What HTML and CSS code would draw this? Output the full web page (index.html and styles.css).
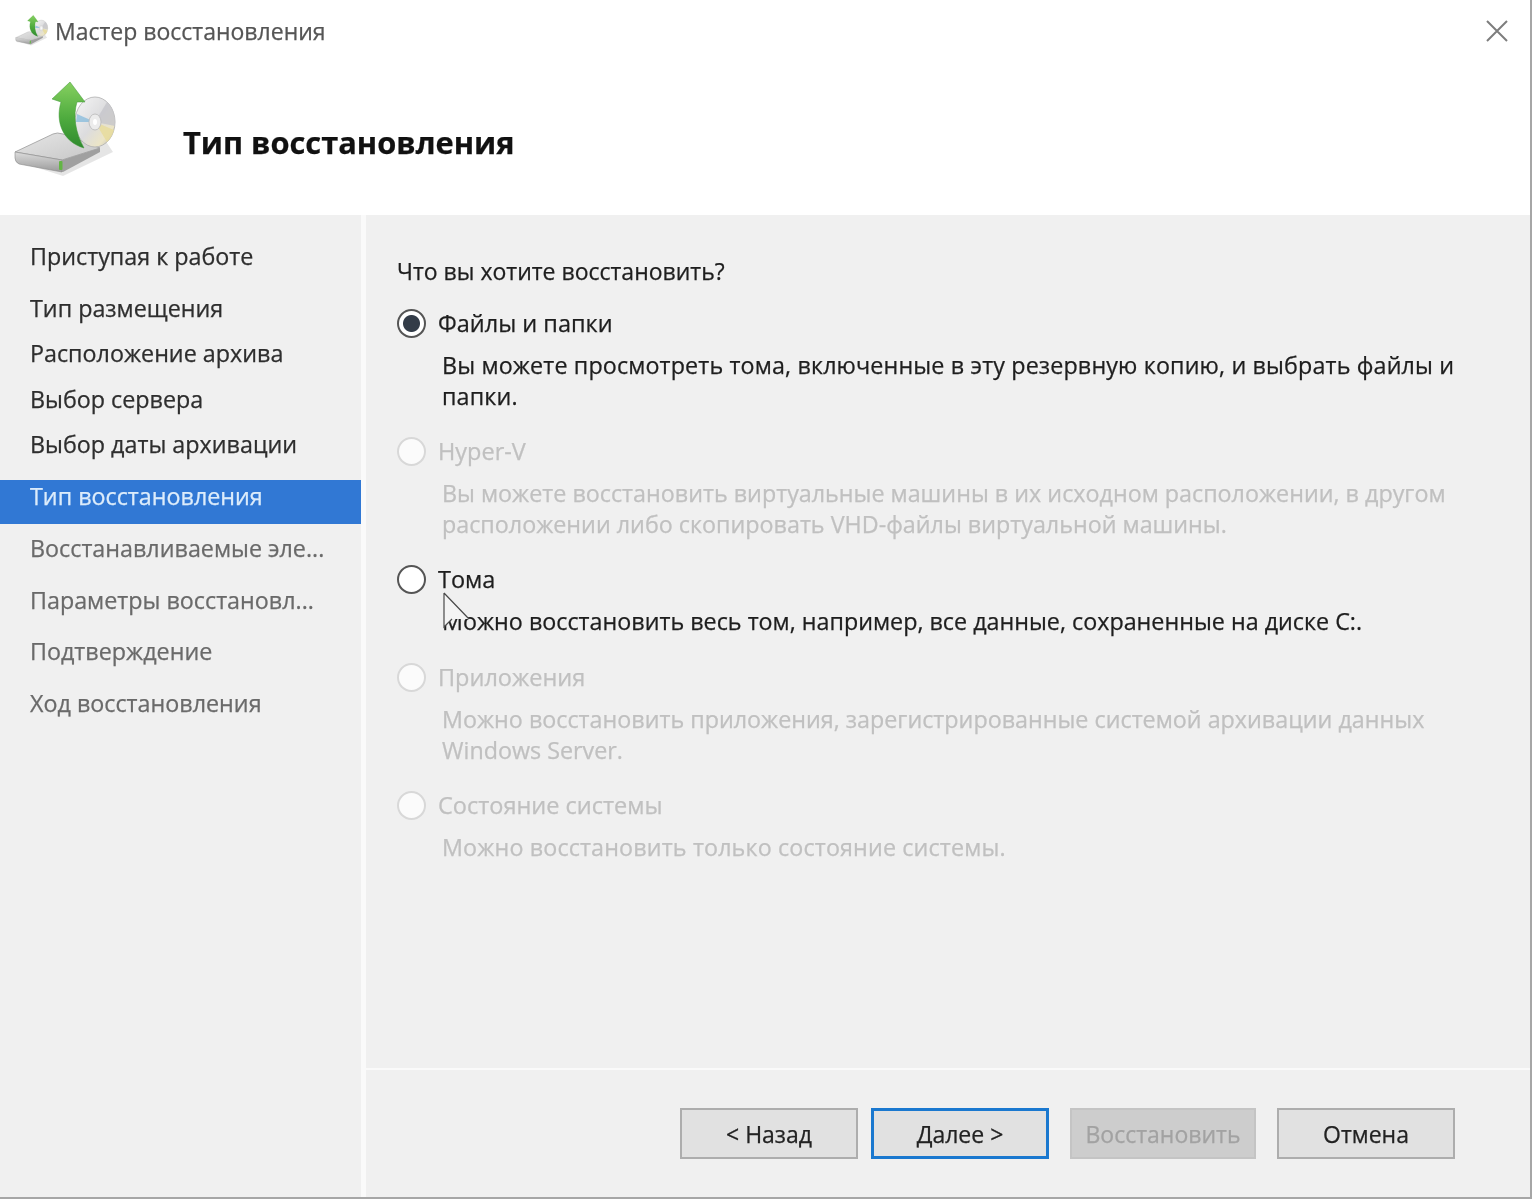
FILE: index.html
```html
<!DOCTYPE html>
<html lang="ru">
<head>
    <meta charset="UTF-8">
    <title>Мастер восстановления</title>
    <link rel="stylesheet" href="styles.css">
</head>
<body>
    <svg class="defs" width="0" height="0" aria-hidden="true">
        <defs>
            <linearGradient id="arrow-fill" x1="0" y1="0" x2="0" y2="1">
                <stop offset="0" stop-color="#86d060"/>
                <stop offset="0.55" stop-color="#4eab3e"/>
                <stop offset="1" stop-color="#2f8a2e"/>
            </linearGradient>
            <linearGradient id="disc-fill" x1="0" y1="0" x2="1" y2="1">
                <stop offset="0" stop-color="#f6f6f6"/>
                <stop offset="0.5" stop-color="#dcdcde"/>
                <stop offset="0.78" stop-color="#ece5c6"/>
                <stop offset="1" stop-color="#b4b4b6"/>
            </linearGradient>
            <linearGradient id="drive-top" x1="0" y1="0" x2="1" y2="1">
                <stop offset="0" stop-color="#e6e6e6"/>
                <stop offset="1" stop-color="#c6c6c6"/>
            </linearGradient>
            <linearGradient id="drive-side" x1="0" y1="0" x2="0" y2="1">
                <stop offset="0" stop-color="#dcdcdc"/>
                <stop offset="1" stop-color="#9a9a9a"/>
            </linearGradient>
            <symbol id="backup-icon" viewBox="0 0 106 102">
                <path d="M6 82 L50 96 L100 72 L92 60 L50 90 Z" fill="#000" opacity="0.1"/>
                <path d="M2 72 L40 54 Q44 52 50 54 L87 68 L49 80 Z" fill="url(#drive-top)" stroke="#9a9a9a" stroke-width="0.8"/>
                <path d="M2 72 L49 80 L49 92 L6 84 Q2 82 2 78 Z" fill="url(#drive-side)" stroke="#8a8a8a" stroke-width="0.6"/>
                <path d="M49 80 L87 68 L87 72 L50 92 L49 92 Z" fill="#a0a0a0"/>
                <rect x="46" y="81" width="3.5" height="9" rx="1" fill="#63b545"/>
                <ellipse cx="82" cy="42" rx="20" ry="25" fill="url(#disc-fill)" stroke="#aeaeae" stroke-width="0.8"/>
                <path d="M82 42 L94 22 A20 25 0 0 1 102 46 Z" fill="#c6c6ca" opacity="0.8"/>
                <path d="M82 42 L101 50 A20 25 0 0 1 94 62 Z" fill="#e8dc9c" opacity="0.85"/>
                <path d="M82 42 L64 34 L63 42 Z" fill="#7fb8dc" opacity="0.7"/>
                <ellipse cx="82" cy="42" rx="6" ry="8" fill="#ececec" stroke="#b8b8b8" stroke-width="0.8"/>
                <ellipse cx="82" cy="42" rx="2" ry="3" fill="#fff"/>
                <path d="M57 2 L72 22 L64 22 C60 35 62 52 71 68 C50 62 42 42 48 22 L39 19 Z" fill="url(#arrow-fill)" stroke="#3f9636" stroke-width="0.5"/>
            </symbol>
        </defs>
    </svg>

    <div class="window">
        <header class="header">
            <div class="titlebar">
                <svg class="title-icon" width="34" height="34"><use href="#backup-icon"/></svg>
                <span class="title">Мастер восстановления</span>
                <svg class="close" width="24" height="24" viewBox="0 0 24 24">
                    <path d="M2 2 L22 22 M22 2 L2 22" stroke="#7d7d7d" stroke-width="2" fill="none"/>
                </svg>
            </div>
            <div class="banner">
                <svg class="banner-icon" width="106" height="102"><use href="#backup-icon"/></svg>
                <h1>Тип восстановления</h1>
            </div>
        </header>

        <div class="body">
            <nav class="steps">
                <div class="step">Приступая к работе</div>
                <div class="step step-gap">Тип размещения</div>
                <div class="step">Расположение архива</div>
                <div class="step">Выбор сервера</div>
                <div class="step">Выбор даты архивации</div>
                <div class="step active">Тип восстановления</div>
                <div class="step next">Восстанавливаемые эле...</div>
                <div class="step step-gap next">Параметры восстановл...</div>
                <div class="step step-gap next">Подтверждение</div>
                <div class="step step-gap next">Ход восстановления</div>
            </nav>

            <main class="panel">
                <div class="content">
                    <p class="question">Что вы хотите восстановить?</p>

                    <div class="option">
                        <span class="radio checked"></span>
                        <span class="label">Файлы и папки</span>
                        <p class="desc loose">Вы можете просмотреть тома, включенные в эту резервную копию, и выбрать файлы и папки.</p>
                    </div>
                    <div class="option disabled">
                        <span class="radio"></span>
                        <span class="label">Hyper-V</span>
                        <p class="desc">Вы можете восстановить виртуальные машины в их исходном расположении, в другом расположении либо скопировать VHD-файлы виртуальной машины.</p>
                    </div>
                    <div class="option single">
                        <span class="radio"></span>
                        <span class="label">Тома</span>
                        <p class="desc">Можно восстановить весь том, например, все данные, сохраненные на диске C:.</p>
                        <svg class="cursor" width="30" height="40" viewBox="0 0 30 40">
                            <path d="M1 1 L1 35 L9 27 L26 27 Z" fill="#f4f4f4"/>
                            <path d="M1 1 L1 35 L9 27 M1 1 L26 27" fill="none" stroke="#4a4a4a" stroke-width="1.2"/>
                        </svg>
                    </div>
                    <div class="option disabled">
                        <span class="radio"></span>
                        <span class="label">Приложения</span>
                        <p class="desc">Можно восстановить приложения, зарегистрированные системой архивации данных Windows Server.</p>
                    </div>
                    <div class="option disabled">
                        <span class="radio"></span>
                        <span class="label">Состояние системы</span>
                        <p class="desc loose">Можно восстановить только состояние системы.</p>
                    </div>
                </div>

                <footer class="footer">
                    <button class="btn">&lt; Назад</button>
                    <button class="btn focused">Далее &gt;</button>
                    <button class="btn wide" disabled>Восстановить</button>
                    <button class="btn">Отмена</button>
                </footer>
            </main>
        </div>
    </div>
</body>
</html>
```

FILE: styles.css
```css
* {
    margin: 0;
    padding: 0;
    box-sizing: border-box;
}

html, body {
    height: 100%;
}

body {
    background: #fff;
    font-family: "Open Sans", "Noto Sans", sans-serif;
    font-size: 23.5px;
    color: #1e1e1e;
    -webkit-text-stroke: 0.25px;
    overflow: hidden;
}

.defs {
    position: absolute;
}

.window {
    width: 1532px;
    height: 1199px;
    display: flex;
    flex-direction: column;
    background: #fff;
    border-right: 2px solid #a6a6a6;
    border-bottom: 2px solid #a6a6a6;
    filter: blur(0.7px);
}

/* title and banner */
.header {
    height: 215px;
    flex-shrink: 0;
    background: #fff;
}

.titlebar {
    height: 62px;
    display: flex;
    align-items: center;
    padding-left: 15px;
}

.title-icon {
    margin-right: 6px;
    flex-shrink: 0;
}

.title {
    color: #555;
    font-size: 23px;
    flex: 1;
}

.close {
    margin-right: 21px;
}

.banner {
    display: flex;
    align-items: flex-start;
    padding: 18px 0 0 13px;
}

.banner-icon {
    flex-shrink: 0;
}

h1 {
    margin: 41px 0 0 64px;
    font-size: 30.8px;
    line-height: 42px;
    font-weight: 700;
    color: #111;
}

.body {
    flex: 1;
    display: flex;
    min-height: 0;
    background: #fafafa;
}

/* left column */
.steps {
    width: 361px;
    flex-shrink: 0;
    background: #f0f0f0;
    padding-top: 19px;
    margin-right: 5px;
    font-size: 23.3px;
}

.step {
    height: 45.5px;
    line-height: 45.5px;
    padding-left: 30px;
    white-space: nowrap;
    color: #2e2e2e;
}

.step-gap {
    margin-top: 6px;
}

.step.active {
    height: 44px;
    line-height: 32px;
    margin-top: 12.5px;
    background: #3178d4;
    color: #dcecfb;
}

.step.next {
    color: #6a6a6a;
}

.step.active + .step {
    margin-top: 2px;
}

/* right panel */
.panel {
    flex: 1;
    display: flex;
    flex-direction: column;
    background: #f0f0f0;
}

.content {
    flex: 1;
    padding: 38px 30px 0 31px;
    border-bottom: 2px solid #fafafa;
}

.question {
    font-size: 23px;
    line-height: 36px;
    margin-bottom: 16px;
}

.option {
    position: relative;
    display: grid;
    grid-template-columns: 41px 1fr;
    align-items: center;
    margin-bottom: 21px;
}

.option.single {
    margin-bottom: 22px;
}

.radio {
    width: 29px;
    height: 29px;
    border-radius: 50%;
    background: #fff;
    border: 2px solid #555;
}

.radio.checked {
    background: radial-gradient(circle, #333c48 0 8px, #fff 9px);
}

.label {
    line-height: 36px;
}

.desc {
    grid-column: 2;
    margin-left: 4px;
    margin-top: 9px;
    font-size: 23.3px;
    line-height: 31px;
}

.desc.loose {
    letter-spacing: 0.14px;
}

.option.disabled {
    color: #c0c0c0;
}

.option.disabled .radio {
    border-color: #d8d8d8;
    background: #fbfbfb;
}

.cursor {
    position: absolute;
    left: 46px;
    top: 31px;
}

.footer {
    height: 127px;
    flex-shrink: 0;
    display: flex;
    justify-content: flex-end;
    align-items: flex-start;
    gap: 13px;
    padding: 38px 75px 0 0;
}

.btn {
    width: 178px;
    height: 51px;
    font-family: inherit;
    font-size: 23px;
    color: #222;
    background: #e1e1e1;
    border: 2px solid #adadad;
}

.btn.focused {
    border: 3px solid #1a78cf;
    margin-right: 8px;
}

.btn.wide {
    width: 186px;
    margin-right: 8px;
}

.btn:disabled {
    background: #cdcdcd;
    border-color: #c4c4c4;
    color: #a2a2a2;
}
```
